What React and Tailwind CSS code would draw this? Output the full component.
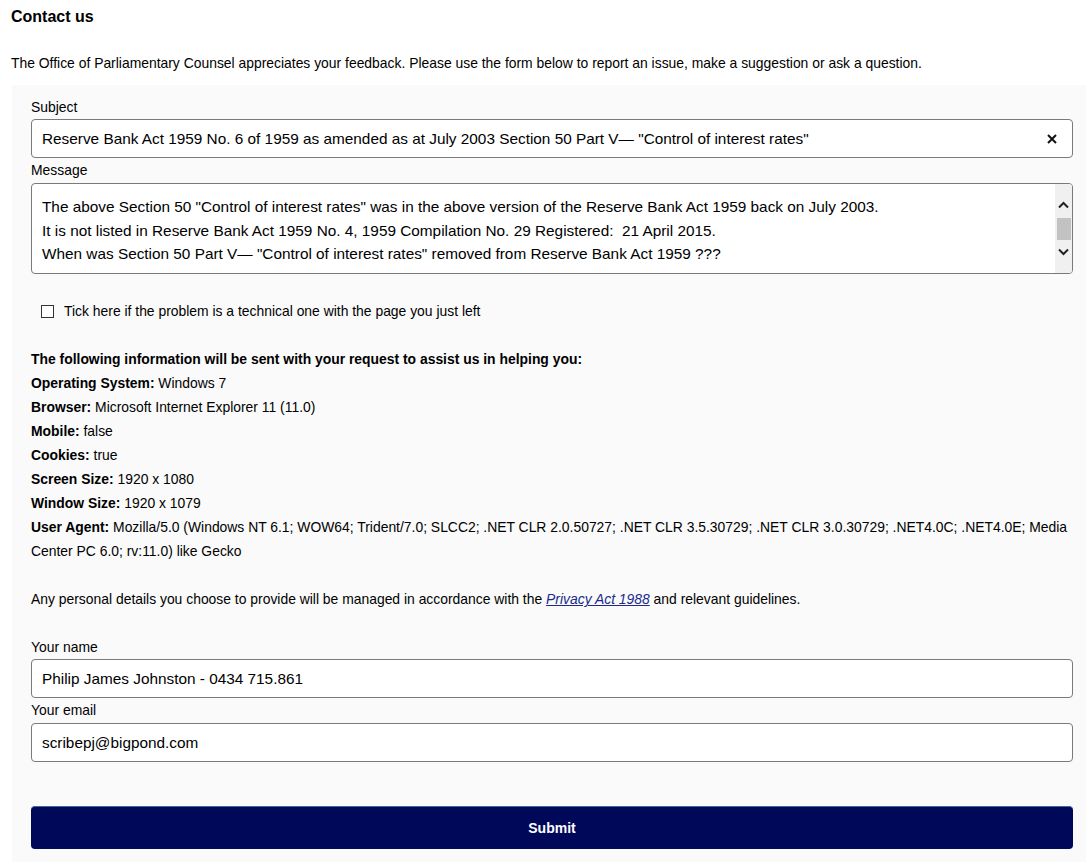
export default function App() {
  const font = { fontFamily: '"Liberation Sans", Arial, sans-serif' };
  const info = [
    ["Operating System:", " Windows 7"],
    ["Browser:", " Microsoft Internet Explorer 11 (11.0)"],
    ["Mobile:", " false"],
    ["Cookies:", " true"],
    ["Screen Size:", " 1920 x 1080"],
    ["Window Size:", " 1920 x 1079"],
  ];
  return (
    <div className="w-[1086px] h-[864px] bg-white text-black overflow-hidden font-['Liberation_Sans',Arial,sans-serif]" style={font}>
      <h1 className="ml-[11px] pt-[8px] text-[16px] leading-[18px] font-bold">Contact us</h1>
      <p className="ml-[11px] mt-[28px] text-[13.9px] leading-[18px]">
        The Office of Parliamentary Counsel appreciates your feedback. Please use the form below to report an issue, make a suggestion or ask a question.
      </p>
      <div className="ml-[12px] mt-[13px] bg-[#fafafa] pl-[19px] pr-[13px] pt-[14px] pb-[13px]">
        <label className="block text-[13.9px] leading-[16px]">Subject</label>
        <div className="mt-[4px] h-[39px] flex items-center bg-white border border-[#7a7a7a] rounded-[4px] pl-[10px] pr-[14px]">
          <span className="flex-1 text-[15.35px] leading-[18px] whitespace-nowrap">
            Reserve Bank Act 1959 No. 6 of 1959 as amended as at July 2003 Section 50 Part V— "Control of interest rates"
          </span>
          <svg width="10" height="10" viewBox="0 0 10 10" className="mr-[1px]">
            <path d="M1 1 L9 9 M9 1 L1 9" stroke="#111" strokeWidth="2" />
          </svg>
        </div>
        <label className="block mt-[4px] text-[13.9px] leading-[16px]">Message</label>
        <div className="mt-[5px] h-[91px] flex bg-white border border-[#7a7a7a] rounded-[4px] overflow-hidden">
          <div className="flex-1 pl-[10px] pt-[11px] text-[15.35px] leading-[23.5px] whitespace-nowrap">
            <div>The above Section 50 "Control of interest rates" was in the above version of the Reserve Bank Act 1959 back on July 2003.</div>
            <div>It is not listed in Reserve Bank Act 1959 No. 4, 1959 Compilation No. 29 Registered:&nbsp; 21 April 2015.</div>
            <div>When was Section 50 Part V— "Control of interest rates" removed from Reserve Bank Act 1959 ???</div>
          </div>
          <div className="w-[17px] bg-[#f0f0f0] flex flex-col items-center">
            <svg width="11" height="8" viewBox="0 0 11 8" className="mt-[17px]">
              <path d="M1 6.5 L5.5 2 L10 6.5" stroke="#222" strokeWidth="2" fill="none" />
            </svg>
            <div className="mt-[9px] w-[14px] h-[22px] bg-[#c2c2c2]" />
            <svg width="11" height="8" viewBox="0 0 11 8" className="mt-[8px]">
              <path d="M1 1.5 L5.5 6 L10 1.5" stroke="#222" strokeWidth="2" fill="none" />
            </svg>
          </div>
        </div>
        <div className="mt-[25px] flex items-center h-[24px] text-[13.9px] pl-[10px]">
          <span className="w-[13px] h-[13px] border border-[#333] bg-white" />
          <span className="ml-[10px]">Tick here if the problem is a technical one with the page you just left</span>
        </div>
        <div className="mt-[24px] text-[13.9px] leading-[24px]">
          <div className="font-bold">The following information will be sent with your request to assist us in helping you:</div>
          {info.map(([k, v]) => (
            <div key={k}>
              <span className="font-bold">{k}</span>
              {v}
            </div>
          ))}
          <div>
            <span className="whitespace-nowrap">
              <span className="font-bold">User Agent:</span> Mozilla/5.0 (Windows NT 6.1; WOW64; Trident/7.0; SLCC2; .NET CLR 2.0.50727; .NET CLR 3.5.30729; .NET CLR 3.0.30729; .NET4.0C; .NET4.0E; Media
            </span>
            <br />
            Center PC 6.0; rv:11.0) like Gecko
          </div>
          <div className="mt-[24px]">
            Any personal details you choose to provide will be managed in accordance with the{" "}
            <a className="italic underline text-[#1c2a8c]">Privacy Act 1988</a> and relevant guidelines.
          </div>
        </div>
        <label className="block mt-[28px] text-[13.9px] leading-[16px]">Your name</label>
        <div className="mt-[4px] h-[39px] flex items-center bg-white border border-[#7a7a7a] rounded-[4px] pl-[10px]">
          <span className="text-[15.35px] leading-[18px]">Philip James Johnston - 0434 715.861</span>
        </div>
        <label className="block mt-[4px] text-[13.9px] leading-[16px]">Your email</label>
        <div className="mt-[5px] h-[39px] flex items-center bg-white border border-[#7a7a7a] rounded-[4px] pl-[10px]">
          <span className="text-[15.35px] leading-[18px]">scribepj@bigpond.com</span>
        </div>
        <button className="mt-[44px] w-full h-[43px] bg-[#00085a] border-t border-[#3a6a9a] rounded-[4px] text-white font-bold text-[14px] flex items-center justify-center">
          Submit
        </button>
      </div>
    </div>
  );
}
